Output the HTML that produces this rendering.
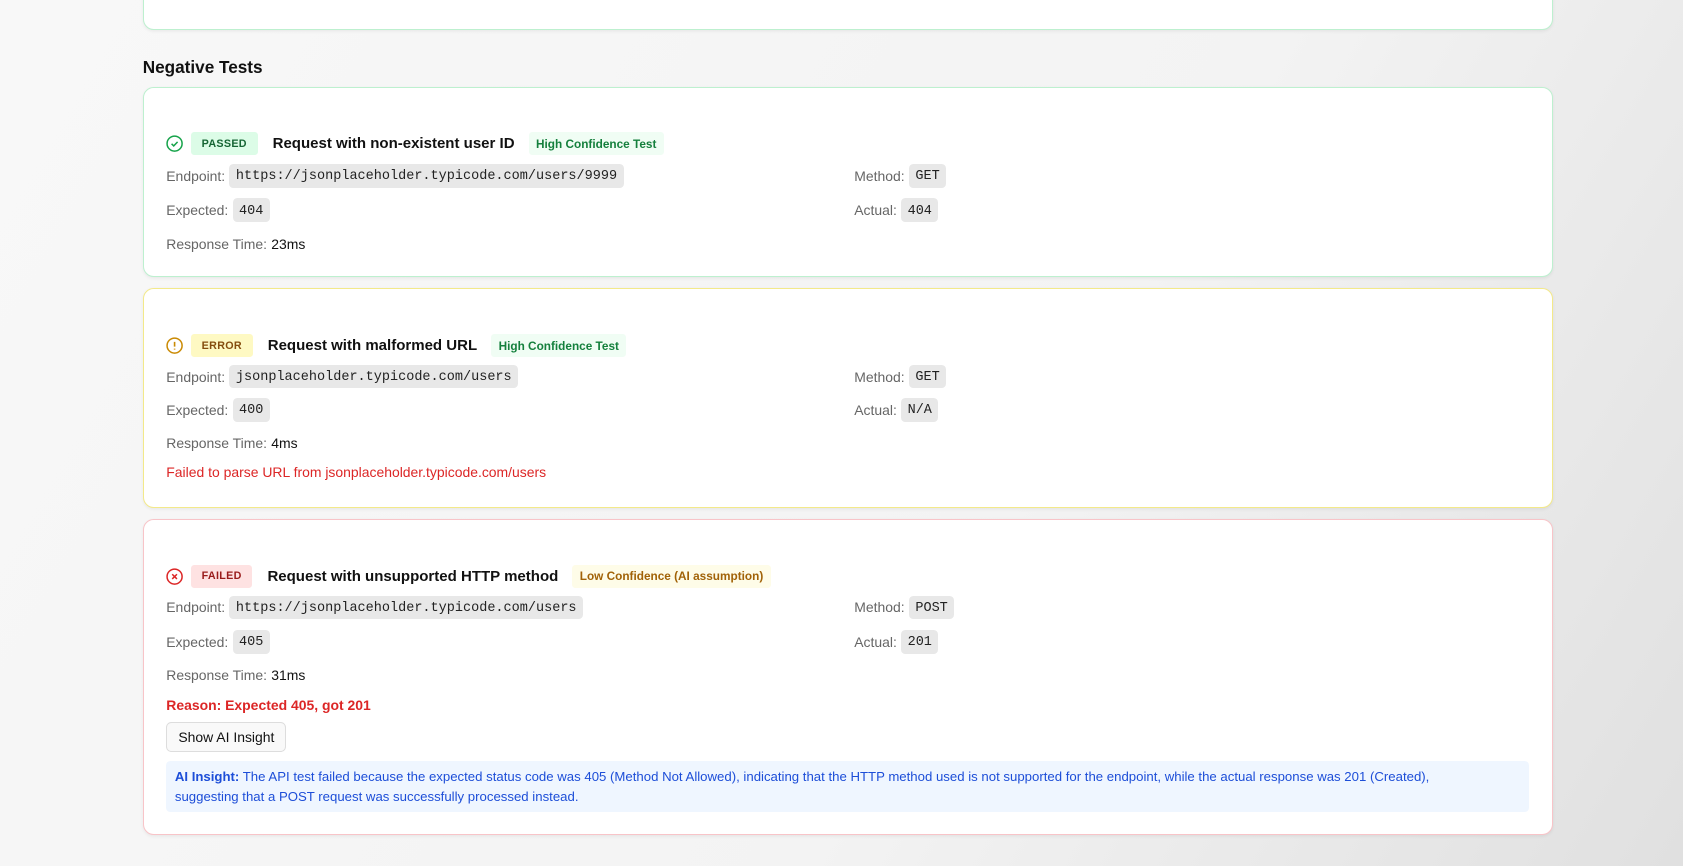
<!DOCTYPE html>
<html><head><style>
*{box-sizing:border-box;margin:0;padding:0}
body{width:1683px;height:866px;overflow:hidden;font-family:"Liberation Sans",sans-serif;background:linear-gradient(120deg,#f8f8f8 0%,#f3f3f3 60%,#e0e0e0 100%);position:relative;color:#111}
#w{zoom:1.0733;position:absolute;left:0;top:0;width:1568px;height:807px}
.card{position:absolute;left:133px;width:1314px;background:#fff;border-radius:10px;border:1px solid;box-shadow:0 1px 3px rgba(0,0,0,.06)}
.g{border-color:#bdf0cf}.y{border-color:#f3e98a}.r{border-color:#f8c4c8}
.row{position:absolute;left:21px;display:flex;align-items:center;font-size:13px;color:#666;height:24px;white-space:nowrap}
.row b{font-weight:normal;color:#111;margin-left:4px}
.code{font-family:"Liberation Mono",monospace;font-size:12.6px;color:#222;background:#e8e8e8;border-radius:4px;padding:5px 6px 3px;margin-left:4px}
.hd{position:absolute;left:21px;display:flex;align-items:center;height:22px;white-space:nowrap}
.st{font-size:10px;font-weight:bold;padding:5px 10px;border-radius:3px;margin-left:7px;letter-spacing:.3px}
.tt{font-size:14px;font-weight:bold;margin-left:14px}
.cf{font-size:11px;padding:4px 7px;border-radius:3px;margin-left:13px;font-weight:bold}
.right{left:662px}
</style></head><body><div id="w">
<div class="card g" style="top:-20px;height:48px"><div class="row" style="top:-2px;">Response Time:<b>15ms</b></div></div>
<div style="position:absolute;left:133px;top:53px;font-size:16px;font-weight:bold">Negative Tests</div>

<div class="card g" style="top:81px;height:177px">
 <div class="hd" style="top:41px"><svg width="16" height="16" viewBox="0 0 16 16"><circle cx="8" cy="8" r="7" fill="none" stroke="#16a34a" stroke-width="1.4"/><path d="M5.2 8.2l2 2 3.6-3.8" fill="none" stroke="#16a34a" stroke-width="1.4"/></svg><span class="st" style="background:#dcfce7;color:#166534">PASSED</span><span class="tt">Request with non-existent user ID</span><span class="cf" style="background:#f0fdf4;color:#15803d">High Confidence Test</span></div>
 <div class="row" style="top:70px">Endpoint:<span class="code">https://jsonplaceholder.typicode.com/users/9999</span></div>
 <div class="row right" style="top:70px">Method:<span class="code">GET</span></div>
 <div class="row" style="top:102px">Expected:<span class="code">404</span></div>
 <div class="row right" style="top:102px">Actual:<span class="code">404</span></div>
 <div class="row" style="top:133px">Response Time:<b>23ms</b></div>
</div>

<div class="card y" style="top:268px;height:205px">
 <div class="hd" style="top:42px"><svg width="16" height="16" viewBox="0 0 16 16"><circle cx="8" cy="8" r="7" fill="none" stroke="#ca8a04" stroke-width="1.4"/><path d="M8 4.5v4.5M8 10.8v1" fill="none" stroke="#ca8a04" stroke-width="1.5"/></svg><span class="st" style="background:#fef9c3;color:#854d0e">ERROR</span><span class="tt">Request with malformed URL</span><span class="cf" style="background:#f0fdf4;color:#15803d">High Confidence Test</span></div>
 <div class="row" style="top:70px">Endpoint:<span class="code">jsonplaceholder.typicode.com/users</span></div>
 <div class="row right" style="top:70px">Method:<span class="code">GET</span></div>
 <div class="row" style="top:101px">Expected:<span class="code">400</span></div>
 <div class="row right" style="top:101px">Actual:<span class="code">N/A</span></div>
 <div class="row" style="top:132px">Response Time:<b>4ms</b></div>
 <div class="row" style="top:159px;color:#dc2626">Failed to parse URL from jsonplaceholder.typicode.com/users</div>
</div>

<div class="card r" style="top:484px;height:294px">
 <div class="hd" style="top:41px"><svg width="16" height="16" viewBox="0 0 16 16"><circle cx="8" cy="8" r="7" fill="none" stroke="#dc2626" stroke-width="1.4"/><path d="M5.8 5.8l4.4 4.4M10.2 5.8l-4.4 4.4" fill="none" stroke="#dc2626" stroke-width="1.4"/></svg><span class="st" style="background:#fee2e2;color:#991b1b">FAILED</span><span class="tt">Request with unsupported HTTP method</span><span class="cf" style="background:#fefce8;color:#a16207">Low Confidence (AI assumption)</span></div>
 <div class="row" style="top:69px">Endpoint:<span class="code">https://jsonplaceholder.typicode.com/users</span></div>
 <div class="row right" style="top:69px">Method:<span class="code">POST</span></div>
 <div class="row" style="top:101px">Expected:<span class="code">405</span></div>
 <div class="row right" style="top:101px">Actual:<span class="code">201</span></div>
 <div class="row" style="top:132px">Response Time:<b>31ms</b></div>
 <div class="row" style="top:160px;color:#dc2626;font-weight:bold">Reason: Expected 405, got 201</div>
 <div style="position:absolute;left:21px;top:188px;height:28px;width:112px;border:1px solid #ddd;border-radius:5px;background:#f9f9f9;font-size:13px;display:flex;align-items:center;justify-content:center">Show AI Insight</div>
 <div style="position:absolute;left:21px;top:224px;width:1270px;height:48px;background:#eff6ff;border-radius:4px;padding:6px 8px;font-size:12.3px;line-height:18px;color:#1d4ed8;white-space:nowrap"><b>AI Insight:</b> The API test failed because the expected status code was 405 (Method Not Allowed), indicating that the HTTP method used is not supported for the endpoint, while the actual response was 201 (Created),<br>suggesting that a POST request was successfully processed instead.</div>
</div>
</div></body></html>
